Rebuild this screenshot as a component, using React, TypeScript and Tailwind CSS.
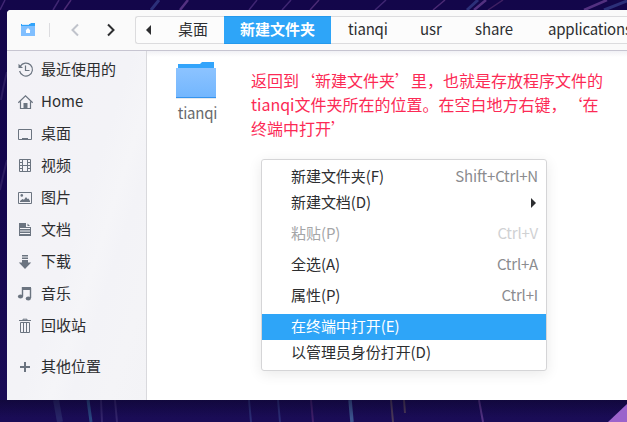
import type { ReactNode } from 'react';

type IconName = 'recent' | 'home' | 'desktop' | 'video' | 'picture' | 'document' | 'download' | 'music' | 'trash' | 'plus';

const glyphs: Record<IconName, ReactNode> = {
  recent: (
    <>
      <path d="M2.3 4.3A6.5 6.5 0 1 1 1.6 9" fill="none" stroke="currentColor" strokeWidth="1.2" />
      <path d="M0.5 1.8V6H5Z" />
      <path d="M7.5 3.5V8.5H11.5" fill="none" stroke="currentColor" strokeWidth="1.2" />
    </>
  ),
  home: (
    <>
      <path d="M0.3 8.8 7.5 1.8 14.7 8.8M2.5 7.5V14.5H12.5V7.5" fill="none" stroke="currentColor" strokeWidth="1.2" />
      <path d="M5.5 9H9.5V14.5H5.5Z" />
    </>
  ),
  desktop: (
    <>
      <path d="M0.5 3.5H13.5V13.5H0.5Z" fill="none" stroke="currentColor" />
      <path d="M4 12H10V13H4Z" />
    </>
  ),
  video: (
    <path
      d="M1.5 1.5H12.5V13.5H1.5ZM4.5 1.5V13.5M9.5 1.5V13.5M4.5 7.5H9.5M1.5 4.5H4.5M1.5 7.5H4.5M1.5 10.5H4.5M9.5 4.5H12.5M9.5 7.5H12.5M9.5 10.5H12.5"
      fill="none"
      stroke="currentColor"
      strokeWidth="1"
    />
  ),
  picture: (
    <>
      <path d="M0.5 2.5H13.5V13.5H0.5Z" fill="none" stroke="currentColor" />
      <circle cx="3.8" cy="5.4" r="1.3" />
      <path d="M2 12V11L4.5 9 6 9.8 8 7 9.5 9 10.5 8.5 12 11V12Z" />
    </>
  ),
  document: (
    <>
      <path d="M1 1H8V5H13V14H1Z" />
      <path d="M9.5 1.5 12 4H9.5Z" />
      <path d="M2 6.5H12M2 9H12M2 11.5H12" stroke="#f3f3f7" fill="none" />
    </>
  ),
  download: <path d="M4 1H10V2.5H4ZM4 3.5H10V5H4ZM4 6H10V8.5H13.2L7 15 0.8 8.5H4Z" />,
  music: (
    <>
      <path d="M4 1H13V4H4Z" />
      <path d="M4.5 1V10M12.5 2V12" stroke="currentColor" strokeWidth="1.4" />
      <ellipse cx="2.5" cy="10.5" rx="2.6" ry="1.9" />
      <ellipse cx="10.3" cy="12.5" rx="2.6" ry="1.9" />
    </>
  ),
  trash: (
    <path
      d="M1 2.5H13M5 2.5V1.2H9V2.5M2.5 4.5H11.5V14.5H2.5ZM5.5 4.5V14.5M8.5 4.5V14.5"
      fill="none"
      stroke="currentColor"
      strokeWidth="1"
    />
  ),
  plus: <path d="M6 3H8V7H12V9H8V13H6V9H2V7H6Z" />,
};

const places: { icon: IconName; label: string }[] = [
  { icon: 'recent', label: '最近使用的' },
  { icon: 'home', label: 'Home' },
  { icon: 'desktop', label: '桌面' },
  { icon: 'video', label: '视频' },
  { icon: 'picture', label: '图片' },
  { icon: 'document', label: '文档' },
  { icon: 'download', label: '下载' },
  { icon: 'music', label: '音乐' },
  { icon: 'trash', label: '回收站' },
];

function Place({ icon, label }: { icon: IconName; label: string }) {
  return (
    <li className="flex h-8 items-center gap-2 pl-[11px]">
      <svg className="h-4 w-[15px] shrink-0 overflow-visible text-[#6b7480]" viewBox="0 0 15 16" fill="currentColor">
        {glyphs[icon]}
      </svg>
      <span className="pb-0.5">{label}</span>
    </li>
  );
}

function Wallpaper() {
  return (
    <svg className="absolute inset-0 h-full w-full" viewBox="0 0 627 422">
      <defs>
        <linearGradient id="sky" x1="0" y1="0" x2="0" y2="1">
          <stop offset="0" stopColor="#13064a" />
          <stop offset="0.5" stopColor="#14064e" />
          <stop offset="1" stopColor="#1a0c56" />
        </linearGradient>
        <linearGradient id="shade" x1="0" y1="0" x2="0" y2="1">
          <stop offset="0" stopColor="#080420" stopOpacity="0.45" />
          <stop offset="1" stopColor="#080420" stopOpacity="0" />
        </linearGradient>
      </defs>
      <rect width="627" height="422" fill="url(#sky)" />
      <g fill="none" strokeWidth="1.5">
        <path d="M0 10 5 0M53 10 59 0M249 10 257 0M282 10 291 0M375 10 386 0" stroke="#3f2672" />
        <path d="M64 10 71 0M310 10 319 0M433 10 445 0" stroke="#4a2a74" />
        <path d="M151 10 159 0M467 10 478 0M604 10 627 1" stroke="#2c3079" strokeWidth="3" />
        <path d="M180 10 188 0M474 10 486 0M584 10 607 0" stroke="#533180" strokeWidth="2.5" />
        <path d="M488 10 503 0" stroke="#402163" />
        <path d="M1 100Q4 83 7 72M0 190Q3 175 7 160" stroke="#2b1c60" strokeWidth="2" />
      </g>
      <g fill="none">
        <path d="M56 400 60 422" stroke="#282468" strokeWidth="6" />
        <path d="M88 400 91 422" stroke="#294580" strokeWidth="3" />
        <path d="M101 400 102 422M115 400 117 422" stroke="#33246c" strokeWidth="2" />
        <path d="M249 400 251 422M278 400 280 422" stroke="#2b2c75" strokeWidth="2" />
        <path d="M311 400 313 422" stroke="#3f1f6a" strokeWidth="2" />
        <path d="M350 400 352 422" stroke="#3b538e" strokeWidth="3.5" />
        <path d="M391 400 393 422M404 400 405 413" stroke="#4b3959" strokeWidth="2" />
        <path d="M479 400 483 422" stroke="#533284" strokeWidth="2" />
      </g>
      <rect y="400" width="627" height="18" fill="url(#shade)" />
      <path d="M608 422 627 404V422Z" fill="#9b63cb" />
    </svg>
  );
}

function Header() {
  return (
    <header className="flex h-[41px] shrink-0 items-start border-b border-[#c7c5d1] bg-[#fafafa] pt-1.5">
      <div className="ml-[14px] flex h-7 w-[114px] shrink-0 items-center">
        <svg className="shrink-0" width="14" height="14" viewBox="0 0 14 14">
          <path d="M0 1H9L10 0H14V5H0Z" fill="#31a3fa" />
          <path d="M1 1H8V2H1Z" fill="#d5ebff" />
          <path d="M0 3H14V13H0Z" fill="#80bfff" />
          <path d="M7 5 9.5 7.5H9V10H5V7.5H4.5Z" fill="#fff" />
        </svg>
        <span className="ml-[14px] h-[14px] w-px shrink-0 bg-[#dcdcdf]" />
        <svg className="ml-[21px] shrink-0" width="8" height="14" viewBox="0 0 8 14" fill="none" stroke="#c0c3cb" strokeWidth="2">
          <path d="M7 1.5 1.5 7 7 12.5" />
        </svg>
        <svg className="ml-[28px] shrink-0" width="8" height="14" viewBox="0 0 8 14" fill="none" stroke="#2d2e30" strokeWidth="2">
          <path d="M1 1.5 6.5 7 1 12.5" />
        </svg>
      </div>
      <nav className="flex h-7 min-w-0 flex-1 items-center rounded-l-[3px] border border-r-0 border-[#dcdcde] bg-[#fcfcfc] whitespace-nowrap">
        <svg className="ml-[10px] mr-[27px] shrink-0" width="5" height="10" viewBox="0 0 5 10" fill="#2d2e30">
          <path d="M5 0V10L0 5Z" />
        </svg>
        <span className="w-[46px] shrink-0 pb-0.5">桌面</span>
        <span className="-my-px flex h-7 w-[107px] shrink-0 items-center justify-center border-y border-[#2499ec] bg-[#2ea5f8] pb-0.5 font-bold text-white">
          新建文件夹
        </span>
        <span className="ml-[17px] w-[72px] shrink-0 pb-0.5 tracking-[-0.2px]">tianqi</span>
        <span className="w-[55px] shrink-0 pb-0.5 tracking-[-0.1px]">usr</span>
        <span className="w-[73px] shrink-0 pb-0.5 tracking-[-0.1px]">share</span>
        <span className="shrink-0 pb-0.5 tracking-[-0.2px]">applications</span>
      </nav>
    </header>
  );
}

function Sidebar() {
  return (
    <aside className="w-[140px] shrink-0 border-r border-[#d9d9dd] bg-[linear-gradient(108deg,#f3f2f7_0%,#f3f3f7_50%,#f5f5f8_62%,#f3f3f7_70%,#f4f4f7_85%,#f3f3f6_100%)] pt-[3px]">
      <ul>
        {places.map((p) => (
          <Place key={p.label} icon={p.icon} label={p.label} />
        ))}
      </ul>
      <ul className="pt-[9px]">
        <Place icon="plus" label="其他位置" />
      </ul>
    </aside>
  );
}

function MenuRow({ label, keys, disabled, active, submenu }: {
  label: string;
  keys?: string;
  disabled?: boolean;
  active?: boolean;
  submenu?: boolean;
}) {
  const tone = active ? 'bg-[#2ea5f8] text-white' : disabled ? 'text-[#a4a5a7]' : 'text-[#2d2e30]';
  return (
    <div className={`flex h-[26px] shrink-0 items-center justify-between pl-[29px] pr-2 ${tone}`}>
      <span className="pb-0.5 tracking-[-0.05px]">{label}</span>
      {keys && (
        <span className={`pb-0.5 tracking-[-0.2px] ${disabled ? 'text-[#d0d1d3]' : 'text-[#8b8c8f]'}`}>{keys}</span>
      )}
      {submenu && (
        <svg className="mr-[2px]" width="5" height="10" viewBox="0 0 5 10" fill="#2d2e30">
          <path d="M0 0V10L5 5Z" />
        </svg>
      )}
    </div>
  );
}

function ContextMenu() {
  return (
    <div className="absolute left-[114px] top-[108px] flex h-[212px] w-[286px] flex-col rounded-[3px] border border-[#d5d5d7] bg-white py-1 shadow-[0_3px_14px_rgba(0,0,0,0.09)]">
      <MenuRow label="新建文件夹(F)" keys="Shift+Ctrl+N" />
      <MenuRow label="新建文档(D)" submenu />
      <div className="h-[5px]" />
      <MenuRow label="粘贴(P)" keys="Ctrl+V" disabled />
      <div className="h-[5px]" />
      <MenuRow label="全选(A)" keys="Ctrl+A" />
      <div className="h-[5px]" />
      <MenuRow label="属性(P)" keys="Ctrl+I" />
      <div className="h-[5px]" />
      <MenuRow label="在终端中打开(E)" active />
      <MenuRow label="以管理员身份打开(D)" />
    </div>
  );
}

function Files() {
  return (
    <main className="relative flex flex-1 items-start bg-white bg-[linear-gradient(#f1f1f5,#fff_6px)]">
      <figure className="ml-[19px] mt-[9px] flex w-[60px] flex-col items-center">
        <svg width="42" height="42" viewBox="0 0 42 42" className="overflow-visible">
          <defs>
            <linearGradient id="folder" x1="0" y1="0" x2="0" y2="1">
              <stop offset="0" stopColor="#8cc3ff" />
              <stop offset="1" stopColor="#72b6fe" />
            </linearGradient>
          </defs>
          <path d="M3 10V4H25L27 2H39V10Z" fill="#32a4fb" />
          <rect x="1" y="36" width="40" height="2.8" fill="#dfe3e8" />
          <rect x="1" y="8" width="40" height="30" fill="url(#folder)" />
          <rect x="1" y="37" width="40" height="1" fill="#3594ee" />
        </svg>
        <figcaption className="pl-[3px] tracking-[-0.2px] text-[#68696c]">tianqi</figcaption>
      </figure>
      <p className="ml-[25px] mt-[17px] whitespace-nowrap text-base leading-6 text-[#fc2a55] [text-spacing-trim:space-all]">
        返回到‘新建文件夹’里，也就是存放程序文件的
        <br />
        tianqi文件夹所在的位置。在空白地方右键，‘在
        <br />
        终端中打开’
      </p>
      <ContextMenu />
    </main>
  );
}

export default function App() {
  return (
    <div
      lang="zh-CN"
      className="relative h-[422px] w-[627px] overflow-hidden pl-[7px] pt-[10px] font-['Noto_Sans_CJK_SC',sans-serif] text-[15px] leading-[22px] text-[#2d2e30]"
    >
      <Wallpaper />
      <div className="relative flex h-[390px] w-[620px] flex-col overflow-hidden rounded-tl-[4px] bg-white">
        <Header />
        <div className="flex min-h-0 flex-1">
          <Sidebar />
          <Files />
        </div>
      </div>
    </div>
  );
}
